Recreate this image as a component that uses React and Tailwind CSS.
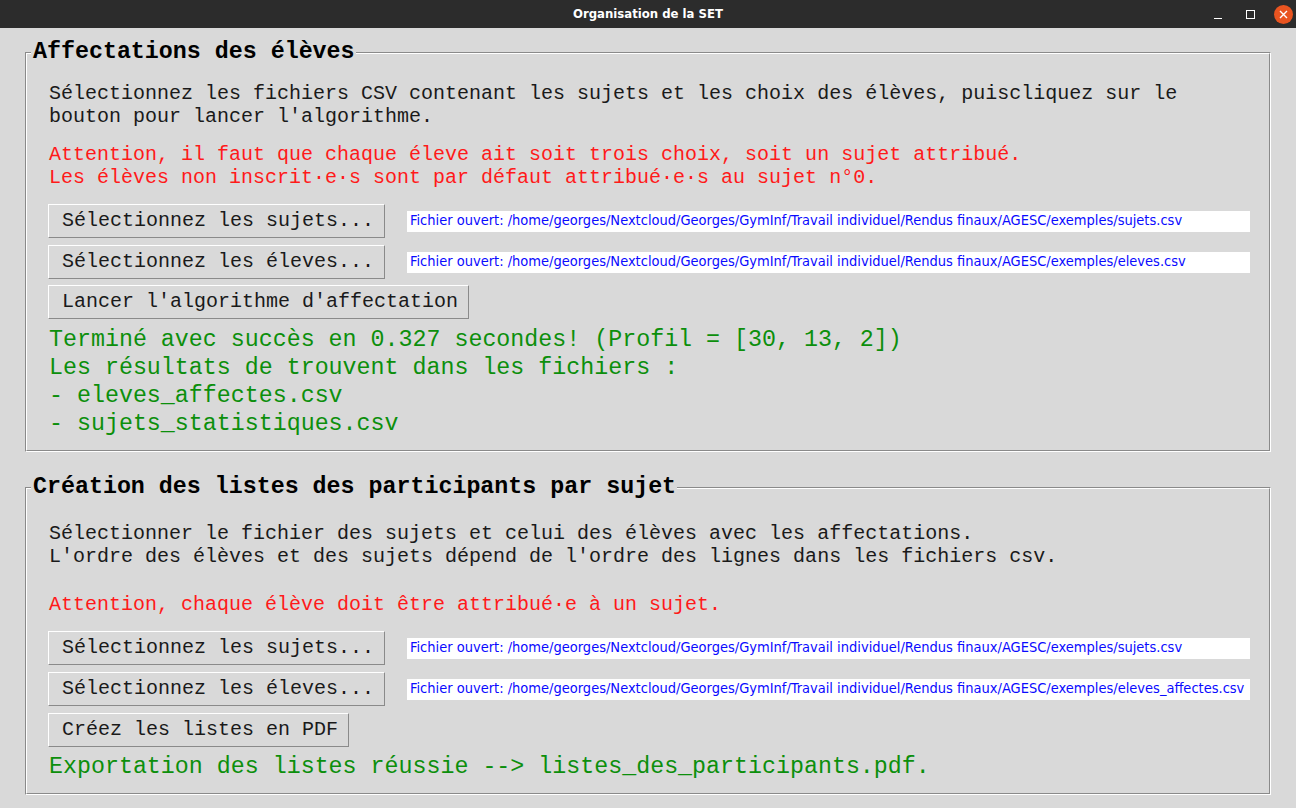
import React from "react";

const mono = { fontFamily: '"Liberation Mono", "DejaVu Sans Mono", monospace' };
const cond = { fontFamily: '"DejaVu Sans Condensed", "DejaVu Sans", sans-serif', fontStretch: "condensed" };

function TitleBar() {
  return (
    <div className="relative h-[28px] bg-[#2c2c2c] flex items-center justify-center">
      <span className="text-white text-[13px] font-bold" style={cond}>Organisation de la SET</span>
      <div className="absolute right-0 top-0 h-[28px] flex items-center">
        <span className="w-[8px] h-[1px] bg-white mr-[24px] mt-[8px]" />
        <span className="w-[9px] h-[9px] border border-white mr-[19px]" />
        <span className="w-[19px] h-[19px] rounded-full bg-[#e95420] mr-[3px] flex items-center justify-center">
          <svg width="9" height="9" viewBox="0 0 9 9">
            <path d="M1 1L8 8M8 1L1 8" stroke="white" strokeWidth="1.4" />
          </svg>
        </span>
      </div>
    </div>
  );
}

// groove border like a Tk labelframe
function Frame({ title, children, className }) {
  return (
    <div className={"relative border border-t-[#8a8a8a] border-l-[#8a8a8a] border-b-white border-r-white " + className}>
      <div className="border border-t-white border-l-white border-b-[#8a8a8a] border-r-[#8a8a8a]">
        {children}
      </div>
      <div className="absolute left-[5px] top-[-14px] bg-[#d9d9d9] pl-[2px] pr-[1px] text-[23.3px] leading-[26px] font-bold text-black" style={mono}>
        {title}
      </div>
    </div>
  );
}

function Btn({ children, w }) {
  return (
    <div
      className={"h-[34px] border border-t-white border-l-white border-b-[#8a8a8a] border-r-[#8a8a8a] flex items-center pl-[13px] text-[20px] text-[#1a1a1a] bg-[#d9d9d9] " + w}
      style={mono}
    >
      {children}
    </div>
  );
}

function FileLabel({ path }) {
  return (
    <div className="ml-[22px] w-[843px] h-[21px] bg-white flex items-center pl-[3px] text-[14.5px] text-[#0a0aff] whitespace-nowrap overflow-hidden" style={cond}>
      Fichier ouvert: {path}
    </div>
  );
}

const base = "/home/georges/Nextcloud/Georges/GymInf/Travail individuel/Rendus finaux/AGESC/exemples/";

export default function App() {
  return (
    <div className="w-[1296px] h-[808px] bg-[#d9d9d9] overflow-hidden">
      <TitleBar />
      <div className="px-[25px]">
        <Frame title="Affectations des élèves" className="mt-[24px]">
          <div className="pl-[21px] pt-[28px] pb-[12px]">
            <div className="text-[20px] leading-[23px] text-[#1a1a1a] pl-[1px] whitespace-pre" style={mono}>
              {"Sélectionnez les fichiers CSV contenant les sujets et les choix des élèves, puiscliquez sur le\nbouton pour lancer l'algorithme."}
            </div>
            <div className="mt-[15px] text-[20px] leading-[23px] text-[#ff1a1a] pl-[1px] whitespace-pre" style={mono}>
              {"Attention, il faut que chaque éleve ait soit trois choix, soit un sujet attribué.\nLes élèves non inscrit·e·s sont par défaut attribué·e·s au sujet n°0."}
            </div>
            <div className="mt-[15px] flex items-center">
              <Btn w="w-[337px]">Sélectionnez les sujets...</Btn>
              <FileLabel path={base + "sujets.csv"} />
            </div>
            <div className="mt-[7px] flex items-center">
              <Btn w="w-[337px]">Sélectionnez les éleves...</Btn>
              <FileLabel path={base + "eleves.csv"} />
            </div>
            <div className="mt-[6px] flex">
              <Btn w="w-[421px]">Lancer l'algorithme d'affectation</Btn>
            </div>
            <div className="mt-[7px] text-[23.3px] leading-[28px] text-[#0c8f0c] pl-[1px] whitespace-pre" style={mono}>
              {"Terminé avec succès en 0.327 secondes! (Profil = [30, 13, 2])\nLes résultats de trouvent dans les fichiers :\n- eleves_affectes.csv\n- sujets_statistiques.csv"}
            </div>
          </div>
        </Frame>
        <Frame title="Création des listes des participants par sujet" className="mt-[35px]">
          <div className="pl-[21px] pt-[33px] pb-[12px]">
            <div className="text-[20px] leading-[23px] text-[#1a1a1a] pl-[1px] whitespace-pre" style={mono}>
              {"Sélectionner le fichier des sujets et celui des élèves avec les affectations.\nL'ordre des élèves et des sujets dépend de l'ordre des lignes dans les fichiers csv."}
            </div>
            <div className="mt-[25px] text-[20px] leading-[23px] text-[#ff1a1a] pl-[1px] whitespace-pre" style={mono}>
              {"Attention, chaque élève doit être attribué·e à un sujet."}
            </div>
            <div className="mt-[15px] flex items-center">
              <Btn w="w-[337px]">Sélectionnez les sujets...</Btn>
              <FileLabel path={base + "sujets.csv"} />
            </div>
            <div className="mt-[7px] flex items-center">
              <Btn w="w-[337px]">Sélectionnez les éleves...</Btn>
              <FileLabel path={base + "eleves_affectes.csv"} />
            </div>
            <div className="mt-[7px] flex">
              <Btn w="w-[301px]">Créez les listes en PDF</Btn>
            </div>
            <div className="mt-[6px] text-[23.3px] leading-[28px] text-[#0c8f0c] pl-[1px] whitespace-pre" style={mono}>
              {"Exportation des listes réussie --> listes_des_participants.pdf."}
            </div>
          </div>
        </Frame>
      </div>
    </div>
  );
}
